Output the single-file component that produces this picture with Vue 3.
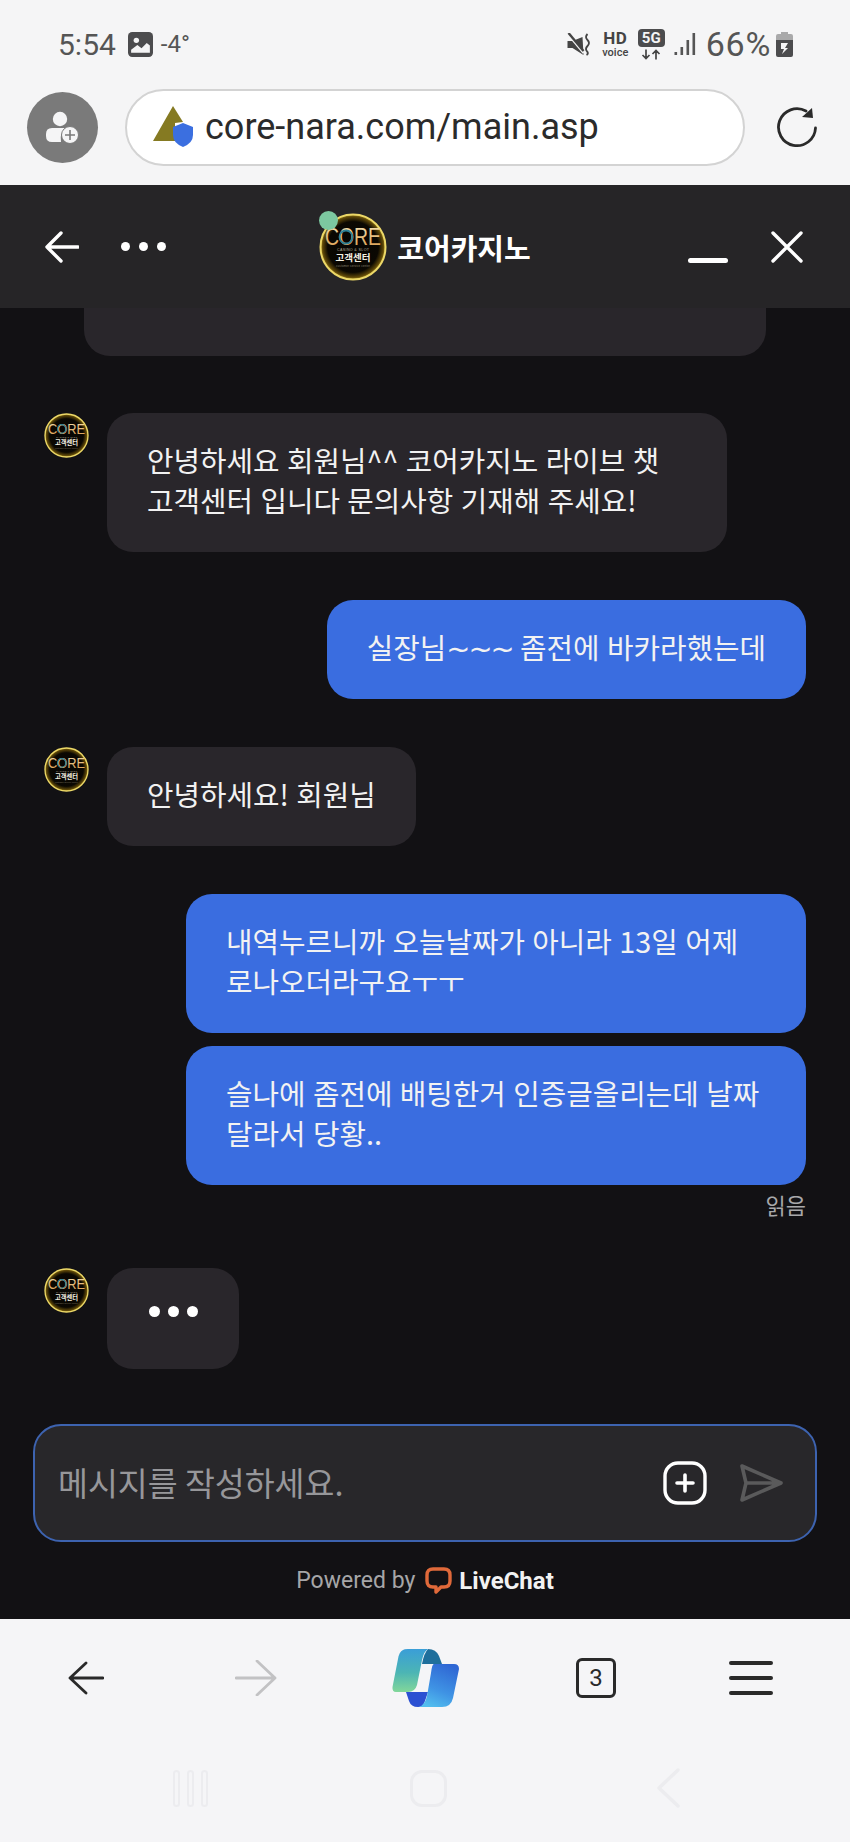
<template>
  <div class="phone">
    <!-- 로고 심볼: 헤더와 아바타에서 같이 씀 -->
    <svg class="defs" width="0" height="0">
      <defs>
        <radialGradient id="logoBg" cx="50%" cy="50%" r="50%">
          <stop offset="0%" stop-color="#060503" />
          <stop offset="78%" stop-color="#0b0802" />
          <stop offset="93%" stop-color="#5c4608" />
          <stop offset="100%" stop-color="#a58a1c" />
        </radialGradient>
        <linearGradient id="logoText" x1="0" y1="0" x2="0" y2="1">
          <stop offset="0%" stop-color="#f3e3b4" />
          <stop offset="100%" stop-color="#d99a4a" />
        </linearGradient>
        <linearGradient id="copilotA" x1="0" y1="0" x2="0" y2="1">
          <stop offset="0%" stop-color="#3a9ed8" />
          <stop offset="55%" stop-color="#4cb5b4" />
          <stop offset="100%" stop-color="#82d79a" />
        </linearGradient>
        <linearGradient id="copilotB" x1="0.7" y1="0" x2="0.3" y2="1">
          <stop offset="0%" stop-color="#2f67d4" />
          <stop offset="60%" stop-color="#3f93e4" />
          <stop offset="100%" stop-color="#52bdee" />
        </linearGradient>
        <symbol id="coreLogo" viewBox="0 0 68 68">
          <circle cx="34" cy="34" r="32.5" fill="url(#logoBg)" stroke="#ecd868" stroke-width="2" />
          <text x="34" y="32" text-anchor="middle" font-family="Liberation Sans, sans-serif" font-size="23" textLength="56" lengthAdjust="spacingAndGlyphs" fill="url(#logoText)">CORE</text>
          <circle cx="27" cy="24" r="6.5" fill="none" stroke="#2d7f95" stroke-width="1.8" />
          <text x="34" y="38" text-anchor="middle" font-family="Liberation Sans, sans-serif" font-size="3.6" textLength="32" fill="#b9b09a">CASINO &amp; SLOT</text>
          <text x="34" y="48" text-anchor="middle" font-family="Noto Sans CJK KR, sans-serif" font-weight="700" font-size="9.5" fill="#f4f0e2">고객센터</text>
          <text x="34" y="54" text-anchor="middle" font-family="Liberation Sans, sans-serif" font-size="2.8" textLength="34" fill="#8d8672">customer service center</text>
        </symbol>
      </defs>
    </svg>

    <div class="browser-top">
      <div class="status">
        <div class="status-left">
          <span class="time">5:54</span>
          <svg class="pic" width="25" height="25" viewBox="0 0 24 24">
            <rect width="24" height="24" rx="4" fill="#4c4c4e" />
            <circle cx="8" cy="8" r="2.6" fill="#f5f5f6" />
            <path d="M3 20 L3 17 L9 12.5 L13 15.5 L18 10.5 L21 13 V20 Z" fill="#f5f5f6" />
          </svg>
          <span class="temp">-4°</span>
        </div>
        <div class="status-right">
          <svg class="mute" width="24" height="23" viewBox="0 0 23 23">
            <path d="M0 8 H5 L15 4 L16 22 L5 15 H0 Z" fill="#444" />
            <path d="M1 2 L16 20" stroke="#f5f5f6" stroke-width="2" />
            <path d="M1 0 L16 18" stroke="#444" stroke-width="2.4" />
            <path d="M20 1 Q17 4 20 7 Q23 10 20 13 Q17 16 20 19 Q21 21 19 22" fill="none" stroke="#444" stroke-width="1.8" />
          </svg>
          <div class="hd">
            <b>HD</b>
            <span>voice</span>
          </div>
          <div class="fiveg">
            <b>5G</b>
            <svg width="20" height="11" viewBox="0 0 20 10">
              <path d="M5 0 V9 M1.5 5.5 L5 9 L8.5 5.5 M15 10 V1 M11.5 4.5 L15 1 L18.5 4.5" fill="none" stroke="#444" stroke-width="1.7" />
            </svg>
          </div>
          <svg class="signal" width="23" height="24" viewBox="0 0 22 24">
            <rect x="0" y="20" width="2.6" height="3" fill="#555" />
            <rect x="6" y="15" width="2.6" height="8" fill="#555" />
            <rect x="12" y="8" width="2.6" height="15" fill="#555" />
            <rect x="18" y="1" width="2.6" height="22" fill="#555" />
          </svg>
          <span class="battery-text">66%</span>
          <svg class="battery" width="17" height="25" viewBox="0 0 17 25">
            <path d="M5 0 H12 V2 H15 Q17 2 17 4 V8 H0 V4 Q0 2 2 2 H5 Z" fill="#a9a9aa" />
            <path d="M0 8 H17 V23 Q17 25 15 25 H2 Q0 25 0 23 Z" fill="#4c4c4e" />
            <path d="M5 11 H12 L9 16 H12 L6 22 L8 17 H5 Z" fill="#f5f5f6" />
          </svg>
        </div>
      </div>
      <div class="toolbar">
        <div class="profile">
          <svg width="34" height="34" viewBox="0 0 34 34">
            <circle cx="14" cy="9" r="7.2" fill="#f5f5f6" />
            <path d="M0 24 Q0 18 6 18 H22 Q13 22 15 32 H6 Q0 32 0 26 Z" fill="#f5f5f6" />
            <circle cx="24" cy="25" r="8.5" fill="#f5f5f6" stroke="#7a7a7a" stroke-width="1" />
            <path d="M24 20 V30 M19 25 H29" stroke="#7a7a7a" stroke-width="1.6" />
          </svg>
        </div>
        <div class="urlbar">
          <svg class="site" width="42" height="42" viewBox="0 0 42 42">
            <path d="M0 35 L20 0 L30 16 L22 17 V35 Z" fill="#857a22" />
            <path d="M30 17 L40 21 V29 Q40 37 30 41 Q20 37 20 29 V21 Z" fill="#3b6fe0" />
          </svg>
          <span class="url">core-nara.com/main.asp</span>
        </div>
        <svg class="reload" width="42" height="42" viewBox="0 0 42 42">
          <path d="M39.5 22 A18.5 18.5 0 1 1 30 5" fill="none" stroke="#2a2a2a" stroke-width="2.8" stroke-linecap="round" />
          <path d="M36 2 L37 12 L26 11 Z" fill="#2a2a2a" />
        </svg>
      </div>
    </div>

    <div class="widget">
      <header class="head">
        <div class="head-side">
          <svg width="34" height="32" viewBox="0 0 34 32">
            <path d="M33 16 H2 M16 2 L2 16 L16 30" fill="none" stroke="#fff" stroke-width="3.4" stroke-linecap="round" stroke-linejoin="round" />
          </svg>
          <div class="head-dots"><i></i><i></i><i></i></div>
        </div>
        <div class="agent">
          <div class="agent-logo">
            <svg width="68" height="68"><use href="#coreLogo" /></svg>
            <span class="online"></span>
          </div>
          <span class="agent-name">코어카지노</span>
        </div>
        <div class="head-side right">
          <span class="minimize"></span>
          <svg width="32" height="32" viewBox="0 0 32 32">
            <path d="M2 2 L30 30 M30 2 L2 30" stroke="#fff" stroke-width="3.4" stroke-linecap="round" />
          </svg>
        </div>
      </header>

      <div class="chat">
        <div class="stub"></div>
        <div v-for="m in messages" :key="m.id" class="row" :class="[m.mine ? 'mine' : 'theirs', m.tight ? 'tight' : '']">
          <svg v-if="!m.mine" class="avatar" width="45" height="45"><use href="#coreLogo" /></svg>
          <div class="bubble">
            <template v-if="m.tilde">{{ m.lead }}<span class="tilde">{{ m.tilde }}</span></template>{{ m.text }}
          </div>
        </div>
        <div class="read">읽음</div>
        <div class="row theirs typing-row">
          <svg class="avatar" width="45" height="45"><use href="#coreLogo" /></svg>
          <div class="bubble typing"><i></i><i></i><i></i></div>
        </div>
      </div>

      <div class="composer">
        <span class="placeholder">메시지를 작성하세요.</span>
        <div class="composer-actions">
          <svg width="44" height="44" viewBox="0 0 44 44">
            <rect x="2" y="2" width="40" height="40" rx="13" fill="none" stroke="#fff" stroke-width="3.4" />
            <path d="M22 14 V30 M14 22 H30" stroke="#fff" stroke-width="3.6" stroke-linecap="round" />
          </svg>
          <svg width="44" height="40" viewBox="0 0 44 40">
            <path d="M3 3 L42 20 L3 37 L7 20 Z M7 20 H42" fill="none" stroke="#5a5a5b" stroke-width="3.6" stroke-linejoin="round" />
          </svg>
        </div>
      </div>

      <div class="powered">
        <span>Powered by</span>
        <svg width="27" height="27" viewBox="0 0 27 27">
          <path d="M8 2 H19 Q25 2 25 8 V14 Q25 20 19 20 H16 L11 25 V20 H8 Q2 20 2 14 V8 Q2 2 8 2 Z" fill="none" stroke="#e0693a" stroke-width="3.4" stroke-linejoin="round" />
        </svg>
        <b>LiveChat</b>
      </div>
    </div>

    <div class="browser-bottom">
      <nav class="nav">
        <svg class="nav-back" width="36" height="34" viewBox="0 0 36 34">
          <path d="M35 17 H2 M18 2 L2 17 L18 32" fill="none" stroke="#2a2a2a" stroke-width="2.8" stroke-linecap="round" stroke-linejoin="round" />
        </svg>
        <svg class="nav-forward" width="42" height="36" viewBox="0 0 42 36">
          <path d="M1 18 H40 M22 1 L40 18 L22 35" fill="none" stroke="#c2c2c4" stroke-width="2.8" stroke-linecap="round" stroke-linejoin="round" />
        </svg>
        <svg class="nav-copilot" width="67" height="58" viewBox="0 0 67 58">
          <path d="M36 0 Q44 0 47 7 L50 15 H30 Q32 4 36 0 Z" fill="#1f6f9c" />
          <path d="M14 43 H36 L33 52 Q31 58 26 58 Q19 58 17 52 Z" fill="#2b50d2" />
          <path d="M11 1 Q12 0 16 0 H36 Q32 2 30 11 L25 36 Q23 43 16 43 H4 Q0 43 0.5 38 L6 10 Q7 3 11 1 Z" fill="url(#copilotA)" />
          <path d="M42 15 H62 Q67 15 67 20 L61 49 Q59 58 50 58 H27 Q33 56 35 47 L39 24 Q40 15 42 15 Z" fill="url(#copilotB)" />
        </svg>
        <div class="tabs">3</div>
        <div class="menu"><i></i><i></i><i></i></div>
      </nav>
      <div class="sysnav">
        <div class="recents"><i></i><i></i><i></i></div>
        <div class="home"></div>
        <svg width="26" height="40" viewBox="0 0 26 40">
          <path d="M23 2 L4 20 L23 38" fill="none" stroke="#ececef" stroke-width="3.4" stroke-linecap="round" stroke-linejoin="round" />
        </svg>
      </div>
    </div>
  </div>
</template>

<script setup>
// 대화 내용 (물결표만 폭이 넓어서 따로 뺌)
const messages = [
  { id: 1, text: '안녕하세요 회원님^^ 코어카지노 라이브 챗 고객센터 입니다 문의사항 기재해 주세요!' },
  { id: 2, mine: true, lead: '실장님', tilde: '~~~', text: ' 좀전에 바카라했는데' },
  { id: 3, text: '안녕하세요! 회원님' },
  { id: 4, mine: true, text: '내역누르니까 오늘날짜가 아니라 13일 어제 로나오더라구요ㅜㅜ' },
  { id: 5, mine: true, tight: true, text: '슬나에 좀전에 배팅한거 인증글올리는데 날짜 달라서 당황..' },
];
</script>

<style>
body {
  background: #f5f5f6;
}
</style>

<style scoped>
.phone {
  width: 850px;
  height: 1842px;
  display: flex;
  flex-direction: column;
  overflow: hidden;
  font-family: "Noto Sans CJK KR", sans-serif;
  background: #f5f5f6;
}

.defs {
  position: absolute;
}

/* 상단 브라우저 */
.browser-top {
  height: 185px;
  flex-shrink: 0;
  padding: 0 0 0 27px;
  box-sizing: border-box;
}

.status {
  height: 88px;
  display: flex;
  justify-content: space-between;
  align-items: center;
  padding: 0 57px 0 31px;
  font-family: Roboto, sans-serif;
  color: #555;
}

.status-left,
.status-right {
  display: flex;
  align-items: center;
}

.time {
  font-size: 30px;
}

.pic {
  margin-left: 12px;
}

.temp {
  font-size: 24px;
  margin-left: 8px;
}

.hd {
  margin-left: 11px;
  width: 27px;
  display: flex;
  flex-direction: column;
  align-items: center;
  color: #444;
  line-height: 1;
}

.hd b {
  font-size: 17px;
  letter-spacing: 0.5px;
}

.hd span {
  font-size: 11px;
  font-weight: 500;
}

.fiveg {
  margin-left: 9px;
  width: 27px;
  display: flex;
  flex-direction: column;
  align-items: center;
}

.fiveg b {
  width: 27px;
  height: 18px;
  border-radius: 4px;
  background: #4c4c4e;
  color: #f5f5f6;
  font-size: 15px;
  line-height: 18px;
  text-align: center;
}

.fiveg svg {
  margin-top: 2px;
}

.signal {
  margin-left: 9px;
}

.battery-text {
  font-size: 34px;
  margin-left: 9px;
  letter-spacing: 0.7px;
}

.battery {
  margin-left: 5px;
}

.toolbar {
  display: flex;
  align-items: center;
  height: 78px;
}

.profile {
  width: 71px;
  height: 71px;
  border-radius: 50%;
  background: #7a7a7a;
  display: flex;
  align-items: center;
  justify-content: center;
  flex-shrink: 0;
}

.urlbar {
  width: 620px;
  height: 77px;
  margin-left: 27px;
  box-sizing: border-box;
  border: 2px solid #d3d3d3;
  border-radius: 39px;
  background: #fff;
  display: flex;
  align-items: center;
  padding-left: 26px;
}

.site {
  flex-shrink: 0;
}

.url {
  margin-left: 10px;
  font-family: Roboto, sans-serif;
  font-size: 36px;
  color: #2b2b2b;
}

.reload {
  margin-left: 31px;
}

/* 채팅 위젯 */
.widget {
  height: 1434px;
  flex-shrink: 0;
  background: #121114;
  display: flex;
  flex-direction: column;
}

.head {
  height: 123px;
  flex-shrink: 0;
  background: #262527;
  display: flex;
  align-items: center;
  justify-content: space-between;
  padding: 0 47px 0 45px;
}

.head-side {
  width: 121px;
  display: flex;
  align-items: center;
  justify-content: space-between;
}

.head-side.right {
  width: 115px;
}

.head-dots {
  display: flex;
  gap: 9px;
}

.head-dots i {
  width: 9px;
  height: 9px;
  border-radius: 50%;
  background: #fff;
}

.agent {
  display: flex;
  align-items: center;
  gap: 10px;
  margin-left: -4px;
}

.agent-logo {
  position: relative;
  width: 68px;
  height: 68px;
}

.online {
  position: absolute;
  left: 0;
  top: -2px;
  width: 19px;
  height: 19px;
  border-radius: 50%;
  background: #7cc8a0;
}

.agent-name {
  font-size: 29px;
  font-weight: 700;
  color: #fff;
}

.minimize {
  width: 40px;
  height: 5px;
  border-radius: 3px;
  background: #fff;
  margin-top: 28px;
}

.chat {
  flex: 1;
  display: flex;
  flex-direction: column;
}

.stub {
  height: 48px;
  margin: 0 84px;
  flex-shrink: 0;
  background: #29262b;
  border-radius: 0 0 26px 26px;
}

.row {
  display: flex;
  margin-top: 48px;
  padding: 0 44px;
}

.row.mine {
  justify-content: flex-end;
}

.row.tight {
  margin-top: 13px;
}

.stub + .row {
  margin-top: 57px;
}

.avatar {
  flex-shrink: 0;
  margin-right: 18px;
}

.bubble {
  max-width: 620px;
  box-sizing: border-box;
  padding: 27px 40px 32px;
  border-radius: 26px;
  background: #29262b;
  color: #f2f2f2;
  font-size: 28.8px;
  line-height: 40px;
  word-spacing: 1px;
  word-break: keep-all;
}

.tilde {
  font-family: "DejaVu Sans", sans-serif;
  line-height: 1;
  letter-spacing: -2px;
}

.mine .bubble {
  background: #3a6de0;
}

.read {
  align-self: flex-end;
  margin: 5px 44px 0 0;
  font-size: 22px;
  line-height: 28px;
  color: #a8a8aa;
}

.typing-row {
  margin-top: 50px;
}

.typing {
  width: 132px;
  height: 101px;
  padding: 38px 0 0;
  display: flex;
  justify-content: center;
  gap: 8px;
}

.typing i {
  width: 11px;
  height: 11px;
  border-radius: 50%;
  background: #fff;
}

.composer {
  height: 118px;
  flex-shrink: 0;
  margin: 0 33px;
  box-sizing: border-box;
  border: 2px solid #3d63b0;
  border-radius: 28px;
  background: #28272a;
  display: flex;
  align-items: center;
  justify-content: space-between;
  padding: 0 32px 0 23px;
}

.placeholder {
  font-size: 32.5px;
  color: #97979a;
  margin-top: -4px;
}

.composer-actions {
  display: flex;
  align-items: center;
  gap: 32px;
}

.powered {
  height: 77px;
  flex-shrink: 0;
  display: flex;
  align-items: center;
  justify-content: center;
  font-family: Roboto, sans-serif;
  font-size: 23px;
  color: #a6a6a8;
}

.powered svg {
  margin-left: 10px;
}

.powered b {
  margin-left: 7px;
  font-size: 24px;
  font-weight: 700;
  color: #f2f2f2;
}

/* 하단 브라우저 */
.browser-bottom {
  flex: 1;
  background: #f5f5f7;
}

.nav {
  height: 118px;
  display: flex;
  align-items: center;
  padding-left: 68px;
  box-sizing: border-box;
}

.nav-forward {
  margin-left: 131px;
}

.nav-copilot {
  margin-left: 115px;
}

.tabs {
  margin-left: 117px;
  width: 40px;
  height: 40px;
  box-sizing: border-box;
  border: 3px solid #2a2a2a;
  border-radius: 6px;
  text-align: center;
  font-family: Roboto, sans-serif;
  font-size: 24px;
  line-height: 34px;
  color: #2a2a2a;
}

.menu {
  margin-left: 113px;
  width: 44px;
  display: flex;
  flex-direction: column;
  gap: 11px;
}

.menu i {
  height: 4px;
  border-radius: 2px;
  background: #2a2a2a;
}

.sysnav {
  display: flex;
  align-items: center;
  height: 46px;
  margin-top: 28px;
  padding-left: 173px;
}

.recents {
  width: 35px;
  display: flex;
  justify-content: space-between;
}

.recents i {
  width: 7px;
  height: 37px;
  box-sizing: border-box;
  border: 2px solid #ececef;
  border-radius: 4px;
}

.home {
  width: 37px;
  height: 37px;
  margin-left: 202px;
  margin-right: 208px;
  box-sizing: border-box;
  border: 3px solid #ececef;
  border-radius: 12px;
}
</style>
